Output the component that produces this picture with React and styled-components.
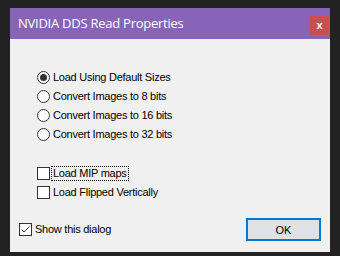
import React from "react";
import styled, { createGlobalStyle } from "styled-components";

const Global = createGlobalStyle`
  html, body { margin: 0; padding: 0; background: #222222; }
  body { width: 340px; height: 256px; overflow: hidden; }
`;

const Page = styled.div`
  padding: 8px 10px 4px 10px;
`;

const Dialog = styled.div`
  width: 320px;
  height: 244px;
  background: #f0f0f0;
  display: flex;
  flex-direction: column;
  font-family: "Liberation Sans", Arial, sans-serif;
  font-size: 11px;
  letter-spacing: -0.25px;
  color: #000;
`;

const TitleBar = styled.div`
  height: 31px;
  background: #8764b8;
  display: flex;
  align-items: flex-start;
  justify-content: space-between;
  padding-left: 8px;
  padding-right: 1px;
  box-sizing: border-box;
`;

const Title = styled.div`
  font-family: "Open Sans", "Noto Sans", sans-serif;
  font-size: 13px;
  color: #ffffff;
  line-height: 31px;
  letter-spacing: -0.25px;
`;

const CloseButton = styled.div`
  margin-top: 8px;
  width: 19px;
  height: 19px;
  background: #c75050;
  color: #fff;
  font-family: "Liberation Sans", Arial, sans-serif;
  font-weight: bold;
  font-size: 11px;
  letter-spacing: 0;
  display: flex;
  align-items: center;
  justify-content: center;
  line-height: 1;
  padding-bottom: 1px;
  box-sizing: border-box;
`;

const Body = styled.div`
  flex: 1;
  display: flex;
  flex-direction: column;
  padding: 29px 9px 11px 27px;
`;

const Group = styled.div`
  display: flex;
  flex-direction: column;
  margin-bottom: ${(p) => p.$gap || 0}px;
`;

const Row = styled.div`
  height: 19px;
  display: flex;
  align-items: center;
  gap: 3px;
`;

const RadioCircle = styled.span`
  width: 13px;
  height: 13px;
  box-sizing: border-box;
  border: 1px solid #333;
  border-radius: 50%;
  background: #fff;
  display: flex;
  align-items: center;
  justify-content: center;
  &::after {
    content: "";
    width: 7px;
    height: 7px;
    border-radius: 50%;
    background: ${(p) => (p.$checked ? "#333" : "transparent")};
  }
`;

const Box = styled.span`
  width: 13px;
  height: 13px;
  box-sizing: border-box;
  border: 1px solid #333;
  background: #fff;
  display: flex;
  align-items: center;
  justify-content: center;
`;

const Label = styled.span`
  padding: 0 1px;
  line-height: 13px;
  border: 1px dotted ${(p) => (p.$focus ? "#000" : "transparent")};
  margin-left: -2px;
`;

const Footer = styled.div`
  margin-top: auto;
  margin-left: -18px;
  display: flex;
  align-items: center;
  justify-content: space-between;
`;

const OkButton = styled.div`
  width: 75px;
  height: 23px;
  box-sizing: border-box;
  border: 2px solid #0078d7;
  background: #e1e1e1;
  display: flex;
  align-items: center;
  justify-content: center;
  font-size: 11px;
  letter-spacing: 0;
`;

const Radio = ({ checked, children }) => (
  <Row>
    <RadioCircle $checked={checked} />
    <Label>{children}</Label>
  </Row>
);

const Check = ({ checked, focus, children }) => (
  <Row>
    <Box>
      {checked && (
        <svg width="11" height="11" viewBox="0 0 11 11">
          <path d="M1.5 5.5 L4 8 L9.5 2.5" stroke="#333" strokeWidth="1" fill="none" />
        </svg>
      )}
    </Box>
    <Label $focus={focus}>{children}</Label>
  </Row>
);

export default function App() {
  return (
    <>
      <Global />
      <Page>
        <Dialog>
          <TitleBar>
            <Title>NVIDIA DDS Read Properties</Title>
            <CloseButton>x</CloseButton>
          </TitleBar>
          <Body>
            <Group $gap={20}>
              <Radio checked>Load Using Default Sizes</Radio>
              <Radio>Convert Images to 8 bits</Radio>
              <Radio>Convert Images to 16 bits</Radio>
              <Radio>Convert Images to 32 bits</Radio>
            </Group>
            <Group>
              <Check focus>Load MIP maps</Check>
              <Check>Load Flipped Vertically</Check>
            </Group>
            <Footer>
              <Check checked>Show this dialog</Check>
              <OkButton>OK</OkButton>
            </Footer>
          </Body>
        </Dialog>
      </Page>
    </>
  );
}
